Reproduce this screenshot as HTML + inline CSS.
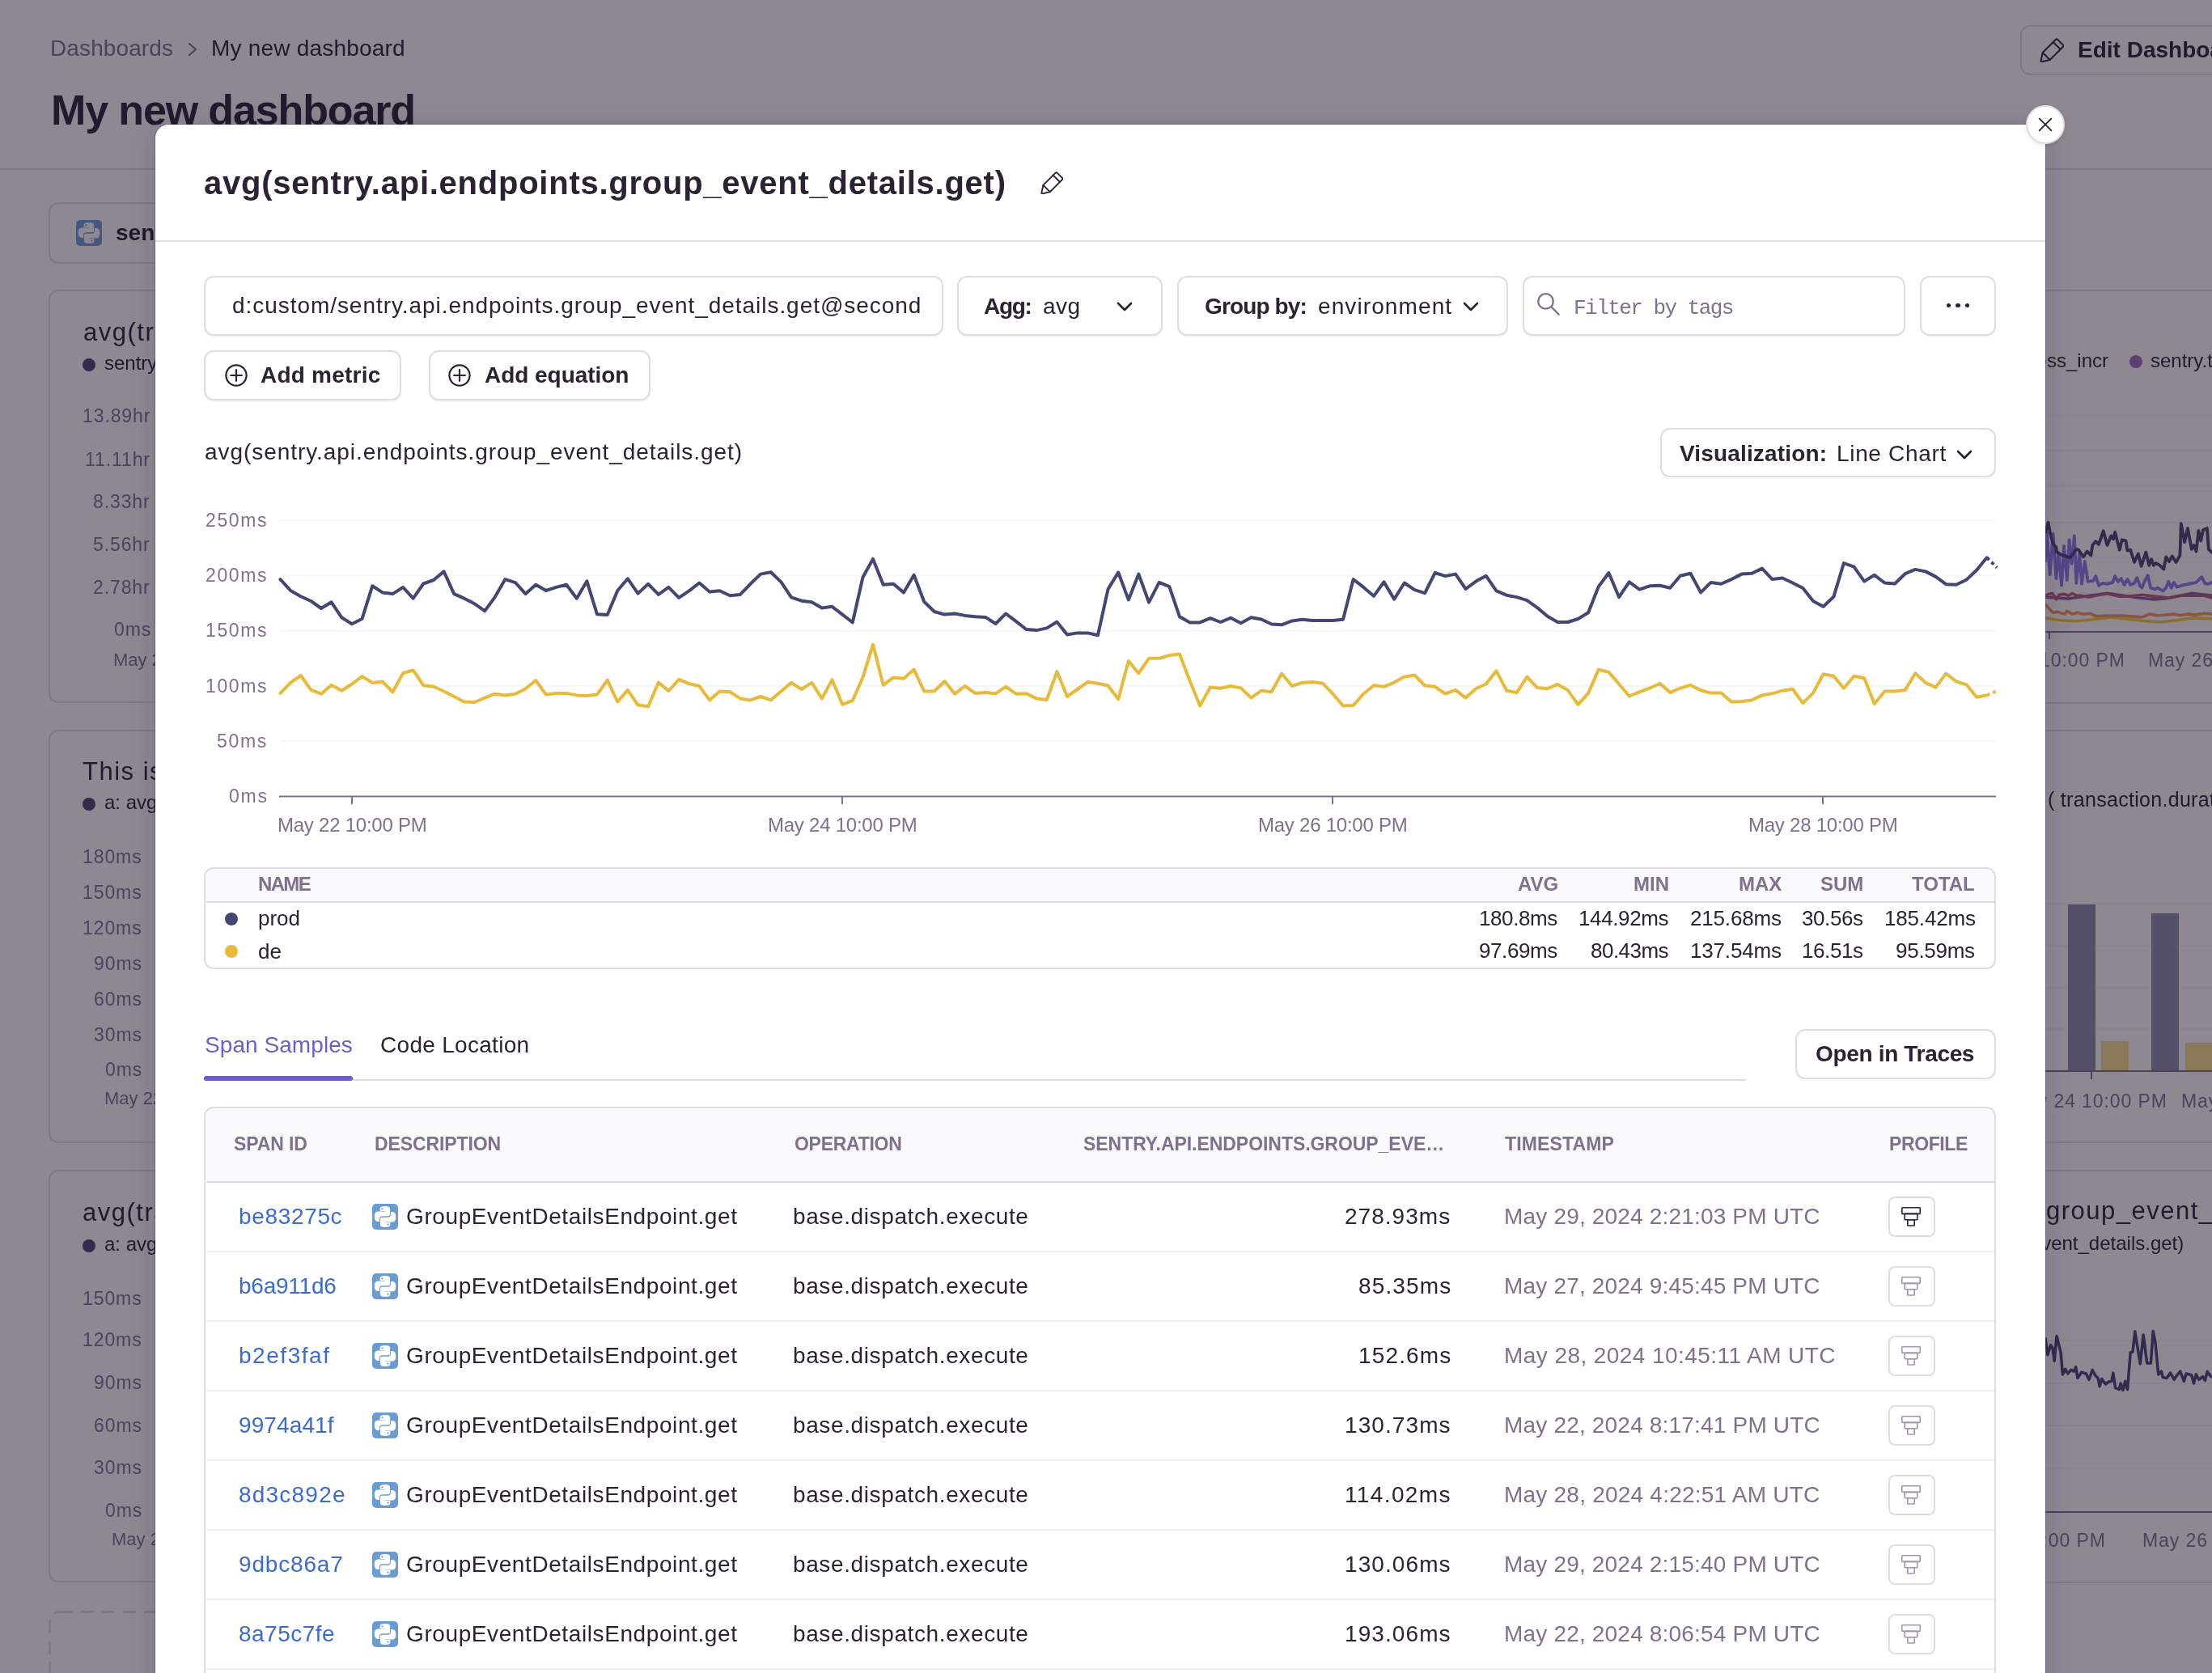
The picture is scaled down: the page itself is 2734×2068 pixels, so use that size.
<!DOCTYPE html><html><head><meta charset="utf-8"><style>
html,body{margin:0;padding:0;width:2734px;height:2068px;overflow:hidden;background:#fff;}
body{position:relative;font-family:"Liberation Sans",sans-serif;}
.a{position:absolute;box-sizing:border-box;}
.t{position:absolute;white-space:nowrap;line-height:1;will-change:transform;}
svg{position:absolute;overflow:visible;}
</style></head><body>
<svg width="0" height="0" style="position:absolute"><defs>
<symbol id="py" viewBox="0 0 32 32"><rect width="32" height="32" rx="5" fill="#6A9CD2"/>
<path id="pys" d="M9.6 9.0V6.2Q9.6 3 15.8 3Q22.1 3 22.1 6.2V12.9Q22.1 15.3 19.6 15.3H12.7Q9 15.3 9 19V21.9H7Q2.7 21.9 2.7 15.6Q2.7 9.6 7 9.6H15.8V9.0Z" fill="#fff"/>
<use href="#pys" transform="rotate(180 16 16)"/>
<circle cx="12.5" cy="6.3" r="1.1" fill="#6A9CD2"/><circle cx="19.5" cy="25.7" r="1.1" fill="#6A9CD2"/>
</symbol>
<symbol id="prof" viewBox="0 0 24 24"><g fill="none" stroke="currentColor" stroke-width="1.6" stroke-linejoin="round">
<rect x="0.8" y="0.8" width="22.4" height="7.6" rx="0.6"/><rect x="4.2" y="8.4" width="15.6" height="7.4" rx="0.5"/><rect x="7.8" y="15.8" width="8.4" height="7.2" rx="0.5"/></g></symbol>
<symbol id="chev" viewBox="0 0 20 12"><path d="M2 2L10 10L18 2" fill="none" stroke="currentColor" stroke-width="2.6" stroke-linecap="round" stroke-linejoin="round"/></symbol>
<symbol id="pencil" viewBox="0 0 28 28"><g fill="none" stroke="currentColor" stroke-width="1.9" stroke-linejoin="round" stroke-linecap="round">
<path d="M3.4 16.8L18.4 1.8Q19.6 0.6 20.8 1.8L26.8 7.8Q28 9 26.8 10.2L11.8 25.2L2.6 27.4Q1.2 27.7 1.4 26.3Z"/><path d="M3.4 16.8L11.8 25.2"/><path d="M15.6 4.6L24 13"/></g></symbol>
<symbol id="plusc" viewBox="0 0 28 28"><g fill="none" stroke="currentColor" stroke-width="2.2" stroke-linecap="round"><circle cx="14" cy="14" r="12.6"/><path d="M14 7.2V20.8M7.2 14H20.8"/></g></symbol>
</defs></svg>

<div class="t" style="left:62.00px;top:46.30px;font-size:28px;font-family:'Liberation Sans', sans-serif;letter-spacing:0.111px;color:#80708F;">Dashboards</div>
<svg style="left:231px;top:52px" width="16" height="18" viewBox="0 0 16 18"><path d="M3 2L11 9L3 16" fill="none" stroke="#80708F" stroke-width="2.2" stroke-linecap="round" stroke-linejoin="round"/></svg>
<div class="t" style="left:261.00px;top:46.30px;font-size:28px;font-family:'Liberation Sans', sans-serif;letter-spacing:0.200px;color:#2B2233;">My new dashboard</div>
<div class="t" style="left:63.00px;top:109.98px;font-size:52px;font-family:'Liberation Sans', sans-serif;font-weight:700;letter-spacing:-1.133px;color:#2B2233;">My new dashboard</div>
<div class="a" style="left:2497px;top:31px;width:337px;height:62px;border:2px solid #E0DCE5;border-radius:12px;background:#fff;"></div>
<svg style="left:2521px;top:47px;color:#2B2233" width="30" height="30" viewBox="0 0 28 28"><use href="#pencil"/></svg>
<div class="t" style="left:2568.00px;top:48.30px;font-size:28px;font-family:'Liberation Sans', sans-serif;font-weight:700;color:#2B2233;">Edit Dashboard</div>
<div class="a" style="left:0px;top:208px;width:2734px;height:2px;background:#E0DCE5;"></div>
<div class="a" style="left:60px;top:250px;width:640px;height:76px;border:2px solid #E0DCE5;border-radius:12px;background:#fff;"></div>
<svg style="left:94px;top:272px" width="32" height="32"><use href="#py"/></svg>
<div class="t" style="left:143.00px;top:274.30px;font-size:28px;font-family:'Liberation Sans', sans-serif;font-weight:700;color:#2B2233;">sentry</div>
<div class="a" style="left:60px;top:358px;width:1300px;height:511px;border:2px solid #E0DCE5;border-radius:12px;background:#fff;"></div>
<div class="a" style="left:60px;top:902px;width:1300px;height:511px;border:2px solid #E0DCE5;border-radius:12px;background:#fff;"></div>
<div class="a" style="left:60px;top:1446px;width:1300px;height:510px;border:2px solid #E0DCE5;border-radius:12px;background:#fff;"></div>
<svg style="left:0;top:0" width="2734" height="2068"><rect x="61.5" y="1992.5" width="1300" height="300" rx="12" fill="none" stroke="#E0DCE5" stroke-width="3" stroke-dasharray="16 10"/></svg>
<div class="a" style="left:1380px;top:358px;width:1454px;height:512px;border:2px solid #E0DCE5;border-radius:12px;background:#fff;"></div>
<div class="a" style="left:1380px;top:902px;width:1454px;height:511px;border:2px solid #E0DCE5;border-radius:12px;background:#fff;"></div>
<div class="a" style="left:1380px;top:1446px;width:1454px;height:511px;border:2px solid #E0DCE5;border-radius:12px;background:#fff;"></div>
<div class="t" style="left:103.00px;top:395.46px;font-size:31px;font-family:'Liberation Sans', sans-serif;letter-spacing:1.500px;color:#2B2233;">avg(transaction.duration)</div>
<div class="a" style="left:102px;top:443px;width:16px;height:16px;border-radius:8px;background:#444674"></div>
<div class="t" style="left:129.00px;top:436.68px;font-size:24px;font-family:'Liberation Sans', sans-serif;color:#2B2233;">sentry.tasks.process_incr</div>
<div class="t" style="left:102.10px;top:503.13px;font-size:23px;font-family:'Liberation Sans', sans-serif;letter-spacing:0.900px;color:#80708F;">13.89hr</div>
<div class="t" style="left:105.10px;top:556.53px;font-size:23px;font-family:'Liberation Sans', sans-serif;letter-spacing:0.900px;color:#80708F;">11.11hr</div>
<div class="t" style="left:115.00px;top:609.03px;font-size:23px;font-family:'Liberation Sans', sans-serif;letter-spacing:0.900px;color:#80708F;">8.33hr</div>
<div class="t" style="left:115.00px;top:661.53px;font-size:23px;font-family:'Liberation Sans', sans-serif;letter-spacing:0.900px;color:#80708F;">5.56hr</div>
<div class="t" style="left:115.00px;top:714.53px;font-size:23px;font-family:'Liberation Sans', sans-serif;letter-spacing:0.900px;color:#80708F;">2.78hr</div>
<div class="t" style="left:140.70px;top:767.13px;font-size:23px;font-family:'Liberation Sans', sans-serif;letter-spacing:0.900px;color:#80708F;">0ms</div>
<div class="t" style="left:140.00px;top:804.98px;font-size:22px;font-family:'Liberation Sans', sans-serif;color:#80708F;">May 22 10:00 PM</div>
<div class="t" style="left:102.00px;top:938.26px;font-size:31px;font-family:'Liberation Sans', sans-serif;letter-spacing:1.500px;color:#2B2233;">This is a widget</div>
<div class="a" style="left:102px;top:986px;width:16px;height:16px;border-radius:8px;background:#444674"></div>
<div class="t" style="left:129.00px;top:979.68px;font-size:24px;font-family:'Liberation Sans', sans-serif;color:#2B2233;">a: avg(transaction.duration)</div>
<div class="t" style="left:102.40px;top:1047.53px;font-size:23px;font-family:'Liberation Sans', sans-serif;letter-spacing:0.900px;color:#80708F;">180ms</div>
<div class="t" style="left:102.40px;top:1091.53px;font-size:23px;font-family:'Liberation Sans', sans-serif;letter-spacing:0.900px;color:#80708F;">150ms</div>
<div class="t" style="left:102.40px;top:1135.53px;font-size:23px;font-family:'Liberation Sans', sans-serif;letter-spacing:0.900px;color:#80708F;">120ms</div>
<div class="t" style="left:116.30px;top:1179.53px;font-size:23px;font-family:'Liberation Sans', sans-serif;letter-spacing:0.900px;color:#80708F;">90ms</div>
<div class="t" style="left:116.30px;top:1223.53px;font-size:23px;font-family:'Liberation Sans', sans-serif;letter-spacing:0.900px;color:#80708F;">60ms</div>
<div class="t" style="left:116.30px;top:1267.53px;font-size:23px;font-family:'Liberation Sans', sans-serif;letter-spacing:0.900px;color:#80708F;">30ms</div>
<div class="t" style="left:130.20px;top:1310.53px;font-size:23px;font-family:'Liberation Sans', sans-serif;letter-spacing:0.900px;color:#80708F;">0ms</div>
<div class="t" style="left:129.00px;top:1347.38px;font-size:22px;font-family:'Liberation Sans', sans-serif;color:#80708F;">May 22 10:00 PM</div>
<div class="t" style="left:102.00px;top:1482.76px;font-size:31px;font-family:'Liberation Sans', sans-serif;letter-spacing:1.500px;color:#2B2233;">avg(transaction.duration)</div>
<div class="a" style="left:102px;top:1532px;width:16px;height:16px;border-radius:8px;background:#444674"></div>
<div class="t" style="left:129.00px;top:1525.68px;font-size:24px;font-family:'Liberation Sans', sans-serif;color:#2B2233;">a: avg(transaction.duration)</div>
<div class="t" style="left:102.40px;top:1593.53px;font-size:23px;font-family:'Liberation Sans', sans-serif;letter-spacing:0.900px;color:#80708F;">150ms</div>
<div class="t" style="left:102.40px;top:1644.53px;font-size:23px;font-family:'Liberation Sans', sans-serif;letter-spacing:0.900px;color:#80708F;">120ms</div>
<div class="t" style="left:116.30px;top:1697.53px;font-size:23px;font-family:'Liberation Sans', sans-serif;letter-spacing:0.900px;color:#80708F;">90ms</div>
<div class="t" style="left:116.30px;top:1750.53px;font-size:23px;font-family:'Liberation Sans', sans-serif;letter-spacing:0.900px;color:#80708F;">60ms</div>
<div class="t" style="left:116.30px;top:1802.53px;font-size:23px;font-family:'Liberation Sans', sans-serif;letter-spacing:0.900px;color:#80708F;">30ms</div>
<div class="t" style="left:130.20px;top:1855.53px;font-size:23px;font-family:'Liberation Sans', sans-serif;letter-spacing:0.900px;color:#80708F;">0ms</div>
<div class="t" style="left:138.00px;top:1892.38px;font-size:22px;font-family:'Liberation Sans', sans-serif;color:#80708F;">May 22 10:00 PM</div>
<div class="t" style="left:2336.70px;top:434.08px;font-size:24px;font-family:'Liberation Sans', sans-serif;color:#2B2233;">sentry.tasks.process_incr</div>
<div class="a" style="left:2632px;top:439px;width:16px;height:16px;border-radius:8px;background:#9D6DB9"></div>
<div class="t" style="left:2658.00px;top:434.08px;font-size:24px;font-family:'Liberation Sans', sans-serif;color:#2B2233;">sentry.tasks.store</div>
<svg style="left:0;top:0" width="2734" height="2068">
<rect x="1380" y="512.6" width="1400" height="2" fill="#F6F4F8"/>
<rect x="1380" y="556" width="1400" height="2" fill="#F6F4F8"/>
<rect x="1380" y="599.5" width="1400" height="2" fill="#F6F4F8"/>
<rect x="1380" y="644.8" width="1400" height="2" fill="#F6F4F8"/>
<rect x="1380" y="688" width="1400" height="2" fill="#F6F4F8"/>
<rect x="1380" y="733.6" width="1400" height="2" fill="#F6F4F8"/>
<rect x="1380" y="1116" width="1400" height="2" fill="#F6F4F8"/>
<rect x="1380" y="1168" width="1400" height="2" fill="#F6F4F8"/>
<rect x="1380" y="1220" width="1400" height="2" fill="#F6F4F8"/>
<rect x="1380" y="1271" width="1400" height="2" fill="#F6F4F8"/>
<rect x="1380" y="1656" width="1400" height="2" fill="#F6F4F8"/>
<rect x="1380" y="1709" width="1400" height="2" fill="#F6F4F8"/>
<rect x="1380" y="1761" width="1400" height="2" fill="#F6F4F8"/>
<rect x="1380" y="1814" width="1400" height="2" fill="#F6F4F8"/>
<polyline points="2528.0,763.9 2547.1,766.8 2566.3,767.7 2585.4,765.8 2609.3,762.9 2633.2,765.8 2652.3,767.7 2671.5,768.7 2690.6,766.8 2709.7,763.9 2734.6,764.9" fill="none" stroke="#F7CF39" stroke-width="3.6" stroke-linejoin="round"/>
<polyline points="2528.0,746.7 2532.8,752.4 2537.6,757.2 2542.3,756.2 2551.9,759.1 2554.8,755.3 2561.5,759.1 2568.2,757.2 2573.9,759.1 2582.5,758.2 2590.2,761.5 2604.5,761.0 2623.6,761.0 2647.5,762.9 2657.1,759.1 2666.7,761.0 2685.8,759.1 2695.4,760.5 2704.9,759.1 2714.5,760.1 2724.1,758.2 2734.6,759.1" fill="none" stroke="#F79959" stroke-width="3.6" stroke-linejoin="round"/>
<polyline points="2528.0,738.1 2556.7,740.0 2604.5,733.3 2642.8,739.0 2661.9,740.9 2676.2,740.0 2709.7,733.3 2734.6,736.2" fill="none" stroke="#81639D" stroke-width="3.6" stroke-linejoin="round"/>
<polyline points="2528.0,736.2 2532.8,734.2 2536.6,733.3 2541.4,740.9 2545.2,735.2 2551.0,734.2 2556.7,736.2 2561.5,733.3 2566.3,736.2 2572.0,736.2 2581.6,738.1 2594.9,735.2 2604.5,733.8 2618.9,737.1 2633.2,737.1 2647.5,735.2 2661.9,737.1 2681.0,739.0 2695.4,736.2 2709.7,736.2 2724.1,736.2 2734.6,739.0" fill="none" stroke="#BF5979" stroke-width="3.6" stroke-linejoin="round"/>
<polyline points="2528.0,695.0 2529.9,658.7 2533.7,710.3 2537.6,659.6 2541.4,715.1 2544.3,683.6 2548.1,723.7 2551.0,675.0 2554.8,717.0 2557.6,667.3 2560.5,696.9 2563.9,662.5 2566.3,720.9 2570.1,683.6 2573.0,721.8 2576.8,694.1 2580.6,718.9 2587.3,718.0 2590.2,712.2 2594.0,723.7 2598.8,720.9 2604.5,721.8 2611.2,719.9 2614.1,712.2 2617.9,718.9 2621.7,715.1 2625.6,722.8 2629.4,716.1 2633.2,722.8 2638.0,720.9 2641.3,714.2 2644.7,723.7 2647.5,726.6 2650.4,718.9 2654.7,711.3 2658.1,726.6 2663.8,728.5 2666.7,726.6 2673.4,730.4 2677.2,726.6 2680.1,718.9 2683.9,726.6 2686.8,719.9 2690.6,725.6 2696.3,723.7 2704.9,721.8 2714.5,719.9 2721.2,713.2 2725.0,720.9 2728.8,721.8 2734.6,719.9" fill="none" stroke="#8E78E6" stroke-width="3.8" stroke-linejoin="round"/>
<polyline points="2528.0,658.7 2531.6,645.8 2533.7,657.7 2537.6,672.1 2541.4,676.9 2541.9,682.1 2547.1,685.5 2552.9,687.4 2558.6,689.3 2566.3,678.8 2569.1,679.7 2574.9,688.3 2579.6,681.6 2584.4,686.4 2586.3,674.0 2590.2,669.2 2594.0,673.0 2599.7,656.3 2604.5,674.0 2609.3,662.5 2612.2,666.3 2614.1,657.7 2619.8,679.7 2622.7,667.3 2627.5,668.3 2629.4,680.7 2633.2,679.7 2638.0,695.0 2642.8,684.5 2646.6,699.8 2652.3,682.6 2656.2,698.9 2659.0,691.2 2661.9,698.9 2664.8,696.0 2669.5,698.9 2674.3,703.6 2677.2,688.3 2681.0,694.1 2684.8,687.4 2689.6,695.0 2694.4,686.4 2695.8,647.2 2700.1,670.2 2704.0,653.0 2708.8,678.8 2711.6,674.0 2714.5,681.6 2717.4,655.8 2720.2,668.3 2723.1,654.9 2727.9,653.0 2729.8,678.8 2734.6,683.6" fill="none" stroke="#444674" stroke-width="3.8" stroke-linejoin="round"/>
<rect x="1380" y="780" width="1400" height="2" fill="#80708F"/><rect x="2532" y="781" width="2" height="9" fill="#80708F"/>
</svg>
<div class="t" style="left:2433.40px;top:805.13px;font-size:23px;font-family:'Liberation Sans', sans-serif;letter-spacing:0.900px;color:#80708F;">May 24 10:00 PM</div>
<div class="t" style="left:2655.00px;top:805.13px;font-size:23px;font-family:'Liberation Sans', sans-serif;letter-spacing:0.900px;color:#80708F;">May 26 10:00 PM</div>
<div class="t" style="left:2531.00px;top:975.84px;font-size:25px;font-family:'Liberation Sans', sans-serif;letter-spacing:0.300px;color:#2B2233;">( transaction.duration)</div>
<div class="a" style="left:2555.6px;top:1117.6px;width:34.40000000000009px;height:206.4000000000001px;background:#8D8FAD;"></div>
<div class="a" style="left:2597px;top:1287px;width:34.40000000000009px;height:37px;background:#F7E189;"></div>
<div class="a" style="left:2659px;top:1128.6px;width:34.40000000000009px;height:195.4000000000001px;background:#8D8FAD;"></div>
<div class="a" style="left:2700.5px;top:1289px;width:33.5px;height:35px;background:#F7E189;"></div>
<div class="a" style="left:1380px;top:1323px;width:1354px;height:2px;background:#80708F;"></div>
<div class="a" style="left:2584px;top:1324px;width:2px;height:10px;background:#80708F;"></div>
<div class="t" style="left:2485.40px;top:1349.53px;font-size:23px;font-family:'Liberation Sans', sans-serif;letter-spacing:0.900px;color:#80708F;">May 24 10:00 PM</div>
<div class="t" style="left:2695.70px;top:1349.53px;font-size:23px;font-family:'Liberation Sans', sans-serif;letter-spacing:0.900px;color:#80708F;">May 26</div>
<div class="t" style="left:2529.00px;top:1480.76px;font-size:31px;font-family:'Liberation Sans', sans-serif;letter-spacing:1.500px;color:#2B2233;">group_event_details.get)</div>
<div class="t" style="left:2141.50px;top:1525.08px;font-size:24px;font-family:'Liberation Sans', sans-serif;color:#2B2233;">a: avg(sentry.api.endpoints.group_event_details.get)</div>
<svg style="left:0;top:0" width="2734" height="2068">
<polyline points="2528.0,1653.3 2530.8,1674.7 2534.5,1662.6 2536.8,1665.4 2539.2,1682.2 2542.0,1651.4 2547.1,1671.9 2549.4,1698.9 2552.7,1692.4 2555.9,1698.0 2559.7,1693.3 2563.4,1695.2 2565.7,1689.6 2568.0,1703.6 2572.7,1696.1 2578.3,1698.0 2582.0,1705.4 2586.2,1693.3 2589.5,1699.8 2593.2,1703.6 2595.1,1713.8 2597.8,1704.5 2602.5,1711.0 2606.2,1708.2 2610.0,1707.3 2611.8,1697.1 2614.6,1715.7 2619.3,1717.5 2621.1,1710.1 2623.9,1718.5 2626.7,1707.3 2629.5,1717.5 2633.2,1671.9 2636.0,1671.0 2638.8,1645.8 2645.3,1685.9 2649.1,1650.0 2653.7,1684.9 2658.4,1684.9 2661.2,1645.4 2664.0,1659.8 2667.7,1698.9 2671.4,1695.2 2673.3,1702.6 2677.9,1703.6 2682.6,1697.1 2687.2,1705.4 2690.0,1700.8 2694.7,1695.2 2699.4,1707.3 2702.1,1698.0 2708.7,1699.8 2711.5,1710.1 2714.3,1698.9 2718.0,1705.4 2722.6,1701.7 2725.4,1706.4 2728.2,1695.2 2731.9,1700.8 2735.7,1702.6" fill="none" stroke="#444674" stroke-width="3.5" stroke-linejoin="round"/>
</svg>
<div class="a" style="left:1380px;top:1868px;width:1354px;height:2px;background:#80708F;"></div>
<div class="t" style="left:2409.40px;top:1892.53px;font-size:23px;font-family:'Liberation Sans', sans-serif;letter-spacing:0.900px;color:#80708F;">May 24 10:00 PM</div>
<div class="t" style="left:2648.00px;top:1892.53px;font-size:23px;font-family:'Liberation Sans', sans-serif;letter-spacing:0.900px;color:#80708F;">May 26 10:00 PM</div>
<div class="a" style="left:0;top:0;width:2734px;height:2068px;background:rgba(29,17,39,0.5)"></div>
<div class="a" style="left:192px;top:154px;width:2336px;height:2100px;background:#fff;border-radius:16px;box-shadow:0 0 0 1px rgba(50,30,90,0.28),0 6px 36px rgba(29,17,39,0.15);"></div>
<div class="t" style="left:252.00px;top:206.14px;font-size:40px;font-family:'Liberation Sans', sans-serif;font-weight:700;letter-spacing:0.750px;color:#2B2233;">avg(sentry.api.endpoints.group_event_details.get)</div>
<svg style="left:1286px;top:212px;color:#2B2233" width="28" height="28" viewBox="0 0 28 28"><use href="#pencil"/></svg>
<div class="a" style="left:192px;top:297px;width:2336px;height:2px;background:#E0DCE5;"></div>
<div class="a" style="left:2504px;top:130px;width:48px;height:48px;border-radius:24px;background:#fff;border:2px solid #E0DCE5;box-shadow:0 2px 6px rgba(0,0,0,0.08)"></div>
<svg style="left:2519px;top:145px" width="18" height="18" viewBox="0 0 18 18"><path d="M1.6 1.6L16.4 16.4M16.4 1.6L1.6 16.4" stroke="#2B2233" stroke-width="1.8" stroke-linecap="round"/></svg>
<div class="a" style="left:252px;top:341px;width:914px;height:74px;border:2px solid #E0DCE5;border-radius:12px;background:#fff;box-shadow:0 2px 0 rgba(43,34,51,0.04);"></div>
<div class="t" style="left:287.40px;top:364.10px;font-size:28px;font-family:'Liberation Sans', sans-serif;letter-spacing:0.949px;color:#2B2233;">d:custom/sentry.api.endpoints.group_event_details.get@second</div>
<div class="a" style="left:1183px;top:341px;width:254px;height:74px;border:2px solid #E0DCE5;border-radius:12px;background:#fff;box-shadow:0 2px 0 rgba(43,34,51,0.04);"></div>
<div class="t" style="left:1216.00px;top:365.10px;font-size:28px;font-family:'Liberation Sans', sans-serif;font-weight:700;letter-spacing:-1.333px;color:#2B2233;">Agg:</div>
<div class="t" style="left:1289.00px;top:365.10px;font-size:28px;font-family:'Liberation Sans', sans-serif;letter-spacing:0.500px;color:#2B2233;">avg</div>
<svg style="left:1380px;top:373px;color:#2B2233" width="20" height="12" viewBox="0 0 20 12"><use href="#chev"/></svg>
<div class="a" style="left:1455px;top:341px;width:409px;height:74px;border:2px solid #E0DCE5;border-radius:12px;background:#fff;box-shadow:0 2px 0 rgba(43,34,51,0.04);"></div>
<div class="t" style="left:1489.00px;top:365.10px;font-size:28px;font-family:'Liberation Sans', sans-serif;font-weight:700;letter-spacing:-0.875px;color:#2B2233;">Group by:</div>
<div class="t" style="left:1629.00px;top:365.10px;font-size:28px;font-family:'Liberation Sans', sans-serif;letter-spacing:1.100px;color:#2B2233;">environment</div>
<svg style="left:1808px;top:373px;color:#2B2233" width="20" height="12" viewBox="0 0 20 12"><use href="#chev"/></svg>
<div class="a" style="left:1882px;top:341px;width:473px;height:74px;border:2px solid #E0DCE5;border-radius:12px;background:#fff;box-shadow:0 2px 0 rgba(43,34,51,0.04);"></div>
<svg style="left:1898px;top:360px" width="32" height="32" viewBox="0 0 32 32"><circle cx="12.5" cy="12.4" r="9.3" fill="none" stroke="#80708F" stroke-width="2.3"/><path d="M19.3 19.3L28.6 28.6" stroke="#80708F" stroke-width="2.3" stroke-linecap="round"/></svg>
<div class="t" style="left:1945.10px;top:367.87px;font-size:26px;font-family:'Liberation Mono', monospace;letter-spacing:-1.538px;color:#80708F;">Filter by tags</div>
<div class="a" style="left:2373px;top:341px;width:94px;height:74px;border:2px solid #E0DCE5;border-radius:12px;background:#fff;box-shadow:0 2px 0 rgba(43,34,51,0.04);"></div>
<div class="a" style="left:2405.6px;top:375.3px;width:5.2px;height:5.2px;border-radius:3px;background:#2B2233"></div>
<div class="a" style="left:2417.4px;top:375.3px;width:5.2px;height:5.2px;border-radius:3px;background:#2B2233"></div>
<div class="a" style="left:2429.1px;top:375.3px;width:5.2px;height:5.2px;border-radius:3px;background:#2B2233"></div>
<div class="a" style="left:252px;top:433px;width:244px;height:62px;border:2px solid #E0DCE5;border-radius:12px;background:#fff;box-shadow:0 2px 0 rgba(43,34,51,0.04);"></div>
<svg style="left:278px;top:450px;color:#2B2233" width="28" height="28" viewBox="0 0 28 28"><use href="#plusc"/></svg>
<div class="t" style="left:322.10px;top:449.90px;font-size:28px;font-family:'Liberation Sans', sans-serif;font-weight:700;letter-spacing:0.222px;color:#2B2233;">Add metric</div>
<div class="a" style="left:530px;top:433px;width:274px;height:62px;border:2px solid #E0DCE5;border-radius:12px;background:#fff;box-shadow:0 2px 0 rgba(43,34,51,0.04);"></div>
<svg style="left:554px;top:450px;color:#2B2233" width="28" height="28" viewBox="0 0 28 28"><use href="#plusc"/></svg>
<div class="t" style="left:599.00px;top:449.90px;font-size:28px;font-family:'Liberation Sans', sans-serif;font-weight:700;letter-spacing:-0.036px;color:#2B2233;">Add equation</div>
<div class="t" style="left:253.00px;top:545.30px;font-size:28px;font-family:'Liberation Sans', sans-serif;letter-spacing:0.938px;color:#2B2233;">avg(sentry.api.endpoints.group_event_details.get)</div>
<div class="a" style="left:2052px;top:529px;width:415px;height:61px;border:2px solid #E0DCE5;border-radius:12px;background:#fff;box-shadow:0 2px 0 rgba(43,34,51,0.04);"></div>
<div class="t" style="left:2076.00px;top:547.00px;font-size:28px;font-family:'Liberation Sans', sans-serif;font-weight:700;letter-spacing:0.154px;color:#2B2233;">Visualization:</div>
<div class="t" style="left:2270.00px;top:547.00px;font-size:28px;font-family:'Liberation Sans', sans-serif;letter-spacing:0.667px;color:#2B2233;">Line Chart</div>
<svg style="left:2418px;top:556px;color:#2B2233" width="20" height="12" viewBox="0 0 20 12"><use href="#chev"/></svg>
<svg style="left:0;top:0" width="2734" height="2068">
<rect x="346" y="642.0" width="2121" height="2" fill="#F7F6F9"/>
<rect x="346" y="710.3" width="2121" height="2" fill="#F7F6F9"/>
<rect x="346" y="778.6" width="2121" height="2" fill="#F7F6F9"/>
<rect x="346" y="846.9" width="2121" height="2" fill="#F7F6F9"/>
<rect x="346" y="915.2" width="2121" height="2" fill="#F7F6F9"/>
<rect x="345" y="983.5" width="2122" height="2" fill="#80708F"/>
<rect x="434" y="984" width="2" height="10" fill="#80708F"/>
<rect x="1040" y="984" width="2" height="10" fill="#80708F"/>
<rect x="1646" y="984" width="2" height="10" fill="#80708F"/>
<rect x="2252" y="984" width="2" height="10" fill="#80708F"/>
<polyline points="346.5,856.9 359.1,843.9 371.8,835.0 384.4,852.9 397.0,857.7 409.6,846.8 422.3,853.7 434.9,845.5 447.5,836.1 460.2,843.9 472.8,842.6 485.4,855.3 498.1,832.2 510.7,828.4 523.3,847.2 536.0,848.8 548.6,854.5 561.2,861.0 573.8,867.5 586.5,868.0 599.1,862.6 611.7,857.7 624.4,859.4 637.0,857.7 649.6,851.2 662.2,841.0 674.9,858.6 687.5,856.9 700.1,856.9 712.8,859.4 725.4,859.9 738.0,858.6 750.7,840.7 763.3,867.5 775.9,852.9 788.5,871.6 801.2,873.2 813.8,843.6 826.4,854.0 839.1,839.8 851.7,845.2 864.3,848.0 877.0,865.4 889.6,854.5 902.2,855.3 914.9,863.4 927.5,865.4 940.1,861.0 952.7,865.4 965.4,854.5 978.0,843.9 990.6,852.0 1003.3,843.9 1015.9,863.4 1028.5,840.3 1041.2,870.8 1053.8,865.9 1066.4,837.4 1079.0,796.7 1091.7,846.8 1104.3,837.4 1116.9,838.7 1129.6,827.6 1142.2,854.5 1154.8,854.5 1167.5,842.0 1180.1,857.7 1192.7,848.0 1205.3,856.9 1218.0,856.1 1230.6,857.3 1243.2,848.8 1255.9,857.7 1268.5,857.3 1281.1,863.4 1293.8,865.1 1306.4,830.1 1319.0,861.0 1331.6,852.0 1344.3,843.1 1356.9,844.7 1369.5,847.5 1382.2,864.3 1394.8,817.1 1407.4,832.2 1420.0,813.8 1432.7,813.8 1445.3,810.1 1457.9,808.4 1470.6,841.5 1483.2,872.4 1495.8,849.6 1508.5,850.7 1521.1,848.0 1533.7,850.4 1546.4,862.6 1559.0,853.7 1571.6,855.3 1584.2,832.5 1596.9,848.0 1609.5,843.9 1622.1,843.1 1634.8,844.7 1647.4,857.7 1660.0,872.4 1672.7,871.9 1685.3,857.7 1697.9,847.2 1710.5,848.8 1723.2,843.6 1735.8,836.6 1748.4,834.5 1761.1,847.5 1773.7,848.8 1786.3,857.7 1799.0,852.9 1811.6,862.6 1824.2,851.2 1836.8,845.5 1849.5,829.3 1862.1,853.7 1874.7,856.1 1887.4,836.6 1900.0,850.1 1912.6,851.2 1925.2,845.9 1937.9,853.3 1950.5,870.8 1963.1,856.9 1975.8,827.6 1988.4,830.9 2001.0,845.5 2013.7,860.5 2026.3,855.3 2038.9,850.7 2051.6,844.7 2064.2,856.1 2076.8,850.7 2089.4,846.8 2102.1,853.3 2114.7,856.6 2127.3,856.6 2140.0,867.5 2152.6,867.0 2165.2,865.4 2177.9,859.4 2190.5,857.3 2203.1,853.7 2215.7,851.7 2228.4,869.1 2241.0,856.6 2253.6,833.3 2266.3,835.8 2278.9,850.7 2291.5,835.8 2304.2,838.2 2316.8,869.9 2329.4,854.5 2342.0,854.5 2354.7,852.9 2367.3,832.2 2379.9,843.9 2392.6,849.6 2405.2,832.5 2417.8,842.3 2430.5,846.3 2443.1,861.8 2455.7,859.4" fill="none" stroke="#E9B93A" stroke-width="4" stroke-linejoin="round" stroke-linecap="round"/>
<line x1="2455.7" y1="859.4" x2="2468.3" y2="854.0" stroke="#E9B93A" stroke-width="4" stroke-dasharray="4 4"/>
<polyline points="346.5,716.1 359.1,730.0 371.8,737.3 384.4,743.0 397.0,752.0 409.6,744.3 422.3,763.3 434.9,771.2 447.5,765.0 460.2,724.3 472.8,732.4 485.4,734.1 498.1,725.9 510.7,739.7 523.3,721.5 536.0,717.0 548.6,706.4 561.2,734.1 573.8,739.7 586.5,746.3 599.1,755.2 611.7,738.1 624.4,716.1 637.0,720.2 649.6,734.1 662.2,722.7 674.9,730.0 687.5,725.9 700.1,722.7 712.8,739.7 725.4,718.3 738.0,759.3 750.7,760.1 763.3,730.0 775.9,715.3 788.5,733.6 801.2,721.8 813.8,734.9 826.4,725.9 839.1,738.9 851.7,730.3 864.3,720.5 877.0,731.6 889.6,730.3 902.2,736.2 914.9,734.9 927.5,721.8 940.1,709.6 952.7,707.2 965.4,719.4 978.0,738.4 990.6,742.7 1003.3,744.3 1015.9,751.5 1028.5,749.8 1041.2,759.6 1053.8,769.4 1066.4,713.7 1079.0,690.9 1091.7,722.7 1104.3,721.8 1116.9,732.4 1129.6,710.8 1142.2,743.8 1154.8,756.0 1167.5,759.6 1180.1,758.5 1192.7,760.9 1205.3,762.2 1218.0,762.9 1230.6,771.0 1243.2,758.5 1255.9,768.2 1268.5,778.0 1281.1,779.1 1293.8,776.4 1306.4,768.7 1319.0,784.5 1331.6,782.4 1344.3,782.4 1356.9,785.3 1369.5,728.4 1382.2,707.5 1394.8,741.4 1407.4,709.6 1420.0,744.6 1432.7,719.9 1445.3,725.1 1457.9,762.2 1470.6,769.4 1483.2,769.4 1495.8,764.2 1508.5,769.0 1521.1,763.8 1533.7,770.3 1546.4,763.3 1559.0,765.5 1571.6,771.5 1584.2,772.3 1596.9,767.4 1609.5,765.8 1622.1,767.1 1634.8,767.1 1647.4,767.1 1660.0,765.8 1672.7,716.1 1685.3,725.9 1697.9,736.8 1710.5,719.4 1723.2,740.6 1735.8,720.5 1748.4,729.2 1761.1,733.2 1773.7,708.0 1786.3,712.1 1799.0,709.6 1811.6,728.0 1824.2,718.6 1836.8,711.8 1849.5,730.3 1862.1,735.7 1874.7,738.1 1887.4,742.2 1900.0,751.1 1912.6,761.7 1925.2,769.0 1937.9,769.0 1950.5,765.0 1963.1,757.3 1975.8,725.1 1988.4,708.0 2001.0,738.1 2013.7,719.4 2026.3,728.7 2038.9,724.3 2051.6,723.8 2064.2,726.7 2076.8,711.8 2089.4,708.8 2102.1,732.4 2114.7,719.9 2127.3,721.8 2140.0,716.1 2152.6,709.6 2165.2,708.8 2177.9,702.6 2190.5,716.1 2203.1,714.5 2215.7,720.5 2228.4,727.1 2241.0,743.0 2253.6,749.8 2266.3,737.8 2278.9,696.1 2291.5,700.7 2304.2,718.6 2316.8,710.8 2329.4,720.5 2342.0,721.5 2354.7,709.2 2367.3,703.9 2379.9,706.4 2392.6,712.9 2405.2,722.2 2417.8,722.7 2430.5,716.6 2443.1,704.8 2455.7,689.3" fill="none" stroke="#444674" stroke-width="4" stroke-linejoin="round" stroke-linecap="round"/>
<line x1="2455.7" y1="689.3" x2="2468.3" y2="701.5" stroke="#444674" stroke-width="4" stroke-dasharray="4 4"/>
</svg>
<div class="t" style="left:253.60px;top:631.83px;font-size:23px;font-family:'Liberation Sans', sans-serif;letter-spacing:1.600px;color:#80708F;">250ms</div>
<div class="t" style="left:253.60px;top:700.13px;font-size:23px;font-family:'Liberation Sans', sans-serif;letter-spacing:1.600px;color:#80708F;">200ms</div>
<div class="t" style="left:253.60px;top:768.43px;font-size:23px;font-family:'Liberation Sans', sans-serif;letter-spacing:1.600px;color:#80708F;">150ms</div>
<div class="t" style="left:253.60px;top:836.73px;font-size:23px;font-family:'Liberation Sans', sans-serif;letter-spacing:1.600px;color:#80708F;">100ms</div>
<div class="t" style="left:268.00px;top:905.03px;font-size:23px;font-family:'Liberation Sans', sans-serif;letter-spacing:1.667px;color:#80708F;">50ms</div>
<div class="t" style="left:282.50px;top:973.33px;font-size:23px;font-family:'Liberation Sans', sans-serif;letter-spacing:1.750px;color:#80708F;">0ms</div>
<div class="t" style="left:342.70px;top:1007.68px;font-size:24px;font-family:'Liberation Sans', sans-serif;letter-spacing:-0.243px;color:#80708F;">May 22 10:00 PM</div>
<div class="t" style="left:948.70px;top:1007.68px;font-size:24px;font-family:'Liberation Sans', sans-serif;letter-spacing:-0.243px;color:#80708F;">May 24 10:00 PM</div>
<div class="t" style="left:1554.70px;top:1007.68px;font-size:24px;font-family:'Liberation Sans', sans-serif;letter-spacing:-0.243px;color:#80708F;">May 26 10:00 PM</div>
<div class="t" style="left:2160.70px;top:1007.68px;font-size:24px;font-family:'Liberation Sans', sans-serif;letter-spacing:-0.243px;color:#80708F;">May 28 10:00 PM</div>
<div class="a" style="left:252px;top:1072px;width:2215px;height:126px;border:2px solid #E0DCE5;border-radius:12px;background:#fff;overflow:hidden;"></div>
<div class="a" style="left:255px;top:1075px;width:2210px;height:40px;background:#FAF9FB;border-radius:10px 10px 0 0;"></div>
<div class="a" style="left:255px;top:1114px;width:2210px;height:2px;background:#E0DCE5;"></div>
<div class="t" style="left:319.30px;top:1081.28px;font-size:24px;font-family:'Liberation Sans', sans-serif;font-weight:700;letter-spacing:-1.667px;color:#80708F;">NAME</div>
<div class="t" style="left:1876.00px;top:1081.28px;font-size:24px;font-family:'Liberation Sans', sans-serif;font-weight:700;color:#80708F;">AVG</div>
<div class="t" style="left:2018.70px;top:1081.28px;font-size:24px;font-family:'Liberation Sans', sans-serif;font-weight:700;color:#80708F;">MIN</div>
<div class="t" style="left:2148.60px;top:1081.28px;font-size:24px;font-family:'Liberation Sans', sans-serif;font-weight:700;color:#80708F;">MAX</div>
<div class="t" style="left:2249.90px;top:1081.28px;font-size:24px;font-family:'Liberation Sans', sans-serif;font-weight:700;color:#80708F;">SUM</div>
<div class="t" style="left:2363.40px;top:1081.28px;font-size:24px;font-family:'Liberation Sans', sans-serif;font-weight:700;color:#80708F;">TOTAL</div>
<div class="a" style="left:278px;top:1128px;width:16px;height:16px;border-radius:8px;background:#444674"></div>
<div class="a" style="left:278px;top:1168px;width:16px;height:16px;border-radius:8px;background:#E9B93A"></div>
<div class="t" style="left:319.30px;top:1122.49px;font-size:26px;font-family:'Liberation Sans', sans-serif;color:#2B2233;">prod</div>
<div class="t" style="left:319.30px;top:1162.99px;font-size:26px;font-family:'Liberation Sans', sans-serif;color:#2B2233;">de</div>
<div class="t" style="left:1828.40px;top:1122.49px;font-size:26px;font-family:'Liberation Sans', sans-serif;letter-spacing:-0.400px;color:#2B2233;">180.8ms</div>
<div class="t" style="left:1951.40px;top:1122.49px;font-size:26px;font-family:'Liberation Sans', sans-serif;letter-spacing:-0.386px;color:#2B2233;">144.92ms</div>
<div class="t" style="left:2088.80px;top:1122.49px;font-size:26px;font-family:'Liberation Sans', sans-serif;letter-spacing:-0.171px;color:#2B2233;">215.68ms</div>
<div class="t" style="left:2227.00px;top:1122.49px;font-size:26px;font-family:'Liberation Sans', sans-serif;letter-spacing:-0.420px;color:#2B2233;">30.56s</div>
<div class="t" style="left:2328.60px;top:1122.49px;font-size:26px;font-family:'Liberation Sans', sans-serif;letter-spacing:-0.171px;color:#2B2233;">185.42ms</div>
<div class="t" style="left:1828.40px;top:1162.49px;font-size:26px;font-family:'Liberation Sans', sans-serif;letter-spacing:-0.400px;color:#2B2233;">97.69ms</div>
<div class="t" style="left:1965.80px;top:1162.49px;font-size:26px;font-family:'Liberation Sans', sans-serif;letter-spacing:-0.517px;color:#2B2233;">80.43ms</div>
<div class="t" style="left:2088.80px;top:1162.49px;font-size:26px;font-family:'Liberation Sans', sans-serif;letter-spacing:-0.171px;color:#2B2233;">137.54ms</div>
<div class="t" style="left:2227.00px;top:1162.49px;font-size:26px;font-family:'Liberation Sans', sans-serif;letter-spacing:-0.420px;color:#2B2233;">16.51s</div>
<div class="t" style="left:2343.00px;top:1162.49px;font-size:26px;font-family:'Liberation Sans', sans-serif;letter-spacing:-0.267px;color:#2B2233;">95.59ms</div>
<div class="t" style="left:252.60px;top:1278.00px;font-size:28px;font-family:'Liberation Sans', sans-serif;letter-spacing:0.064px;color:#6C5FC7;">Span Samples</div>
<div class="t" style="left:469.50px;top:1278.00px;font-size:28px;font-family:'Liberation Sans', sans-serif;letter-spacing:0.292px;color:#2B2233;">Code Location</div>
<div class="a" style="left:252px;top:1334px;width:1906px;height:2px;background:#E0DCE5;"></div>
<div class="a" style="left:251.6px;top:1330px;width:184.70000000000002px;height:6px;background:#6C5FC7;border-radius:3px;"></div>
<div class="a" style="left:2219px;top:1272px;width:248px;height:62px;border:2px solid #E0DCE5;border-radius:12px;background:#fff;box-shadow:0 2px 0 rgba(43,34,51,0.04);"></div>
<div class="t" style="left:2244.00px;top:1289.30px;font-size:28px;font-family:'Liberation Sans', sans-serif;font-weight:700;letter-spacing:-0.331px;color:#2B2233;">Open in Traces</div>
<div class="a" style="left:252px;top:1368px;width:2215px;height:932px;border:2px solid #E0DCE5;border-radius:12px;background:#fff;"></div>
<div class="a" style="left:255px;top:1371px;width:2210px;height:90px;background:#FAF9FB;border-radius:10px 10px 0 0;"></div>
<div class="a" style="left:255px;top:1460px;width:2210px;height:2px;background:#E0DCE5;"></div>
<div class="t" style="left:288.80px;top:1402.53px;font-size:23px;font-family:'Liberation Sans', sans-serif;font-weight:700;letter-spacing:-0.133px;color:#80708F;">SPAN ID</div>
<div class="t" style="left:463.40px;top:1402.53px;font-size:23px;font-family:'Liberation Sans', sans-serif;font-weight:700;letter-spacing:-0.100px;color:#80708F;">DESCRIPTION</div>
<div class="t" style="left:981.80px;top:1402.53px;font-size:23px;font-family:'Liberation Sans', sans-serif;font-weight:700;letter-spacing:-0.275px;color:#80708F;">OPERATION</div>
<div class="t" style="left:1339.00px;top:1402.53px;font-size:23px;font-family:'Liberation Sans', sans-serif;font-weight:700;letter-spacing:-0.050px;color:#80708F;">SENTRY.API.ENDPOINTS.GROUP_EVE…</div>
<div class="t" style="left:1860.40px;top:1402.53px;font-size:23px;font-family:'Liberation Sans', sans-serif;font-weight:700;letter-spacing:0.137px;color:#80708F;">TIMESTAMP</div>
<div class="t" style="left:2335.00px;top:1402.53px;font-size:23px;font-family:'Liberation Sans', sans-serif;font-weight:700;letter-spacing:-0.383px;color:#80708F;">PROFILE</div>
<div class="a" style="left:255px;top:1546px;width:2210px;height:2px;background:#F0ECF3;"></div>
<div class="t" style="left:295.00px;top:1489.60px;font-size:28px;font-family:'Liberation Sans', sans-serif;letter-spacing:0.657px;color:#3A6BD0;">be83275c</div>
<svg style="left:460px;top:1488px" width="32" height="32"><use href="#py"/></svg>
<div class="t" style="left:502.10px;top:1489.60px;font-size:28px;font-family:'Liberation Sans', sans-serif;letter-spacing:0.596px;color:#2B2233;">GroupEventDetailsEndpoint.get</div>
<div class="t" style="left:980.40px;top:1489.60px;font-size:28px;font-family:'Liberation Sans', sans-serif;letter-spacing:0.615px;color:#2B2233;">base.dispatch.execute</div>
<div class="t" style="left:1662.40px;top:1489.60px;font-size:28px;font-family:'Liberation Sans', sans-serif;letter-spacing:1.029px;color:#2B2233;">278.93ms</div>
<div class="t" style="left:1858.80px;top:1489.60px;font-size:28px;font-family:'Liberation Sans', sans-serif;letter-spacing:0.177px;color:#80708F;">May 29, 2024 2:21:03 PM UTC</div>
<div class="a" style="left:2333.5px;top:1478.5px;width:58.80000000000018px;height:50.90000000000009px;border:2px solid #E0DCE5;border-radius:8px;background:#fff;"></div>
<svg style="left:2350px;top:1492px;color:#2B2233" width="24" height="24" viewBox="0 0 24 24"><use href="#prof"/></svg>
<div class="a" style="left:255px;top:1632px;width:2210px;height:2px;background:#F0ECF3;"></div>
<div class="t" style="left:295.00px;top:1575.60px;font-size:28px;font-family:'Liberation Sans', sans-serif;letter-spacing:-0.243px;color:#3A6BD0;">b6a911d6</div>
<svg style="left:460px;top:1574px" width="32" height="32"><use href="#py"/></svg>
<div class="t" style="left:502.10px;top:1575.60px;font-size:28px;font-family:'Liberation Sans', sans-serif;letter-spacing:0.596px;color:#2B2233;">GroupEventDetailsEndpoint.get</div>
<div class="t" style="left:980.40px;top:1575.60px;font-size:28px;font-family:'Liberation Sans', sans-serif;letter-spacing:0.615px;color:#2B2233;">base.dispatch.execute</div>
<div class="t" style="left:1678.70px;top:1575.60px;font-size:28px;font-family:'Liberation Sans', sans-serif;letter-spacing:1.150px;color:#2B2233;">85.35ms</div>
<div class="t" style="left:1858.80px;top:1575.60px;font-size:28px;font-family:'Liberation Sans', sans-serif;letter-spacing:0.177px;color:#80708F;">May 27, 2024 9:45:45 PM UTC</div>
<div class="a" style="left:2333.5px;top:1564.5px;width:58.80000000000018px;height:50.90000000000009px;border:2px solid #E0DCE5;border-radius:8px;background:#fff;"></div>
<svg style="left:2350px;top:1578px;color:#A396B0" width="24" height="24" viewBox="0 0 24 24"><use href="#prof"/></svg>
<div class="a" style="left:255px;top:1718px;width:2210px;height:2px;background:#F0ECF3;"></div>
<div class="t" style="left:295.00px;top:1661.60px;font-size:28px;font-family:'Liberation Sans', sans-serif;letter-spacing:1.543px;color:#3A6BD0;">b2ef3faf</div>
<svg style="left:460px;top:1660px" width="32" height="32"><use href="#py"/></svg>
<div class="t" style="left:502.10px;top:1661.60px;font-size:28px;font-family:'Liberation Sans', sans-serif;letter-spacing:0.596px;color:#2B2233;">GroupEventDetailsEndpoint.get</div>
<div class="t" style="left:980.40px;top:1661.60px;font-size:28px;font-family:'Liberation Sans', sans-serif;letter-spacing:0.615px;color:#2B2233;">base.dispatch.execute</div>
<div class="t" style="left:1678.70px;top:1661.60px;font-size:28px;font-family:'Liberation Sans', sans-serif;letter-spacing:1.150px;color:#2B2233;">152.6ms</div>
<div class="t" style="left:1858.80px;top:1661.60px;font-size:28px;font-family:'Liberation Sans', sans-serif;letter-spacing:0.430px;color:#80708F;">May 28, 2024 10:45:11 AM UTC</div>
<div class="a" style="left:2333.5px;top:1650.5px;width:58.80000000000018px;height:50.90000000000009px;border:2px solid #E0DCE5;border-radius:8px;background:#fff;"></div>
<svg style="left:2350px;top:1664px;color:#A396B0" width="24" height="24" viewBox="0 0 24 24"><use href="#prof"/></svg>
<div class="a" style="left:255px;top:1804px;width:2210px;height:2px;background:#F0ECF3;"></div>
<div class="t" style="left:295.00px;top:1747.60px;font-size:28px;font-family:'Liberation Sans', sans-serif;letter-spacing:0.114px;color:#3A6BD0;">9974a41f</div>
<svg style="left:460px;top:1746px" width="32" height="32"><use href="#py"/></svg>
<div class="t" style="left:502.10px;top:1747.60px;font-size:28px;font-family:'Liberation Sans', sans-serif;letter-spacing:0.596px;color:#2B2233;">GroupEventDetailsEndpoint.get</div>
<div class="t" style="left:980.40px;top:1747.60px;font-size:28px;font-family:'Liberation Sans', sans-serif;letter-spacing:0.615px;color:#2B2233;">base.dispatch.execute</div>
<div class="t" style="left:1662.00px;top:1747.60px;font-size:28px;font-family:'Liberation Sans', sans-serif;letter-spacing:1.086px;color:#2B2233;">130.73ms</div>
<div class="t" style="left:1858.80px;top:1747.60px;font-size:28px;font-family:'Liberation Sans', sans-serif;letter-spacing:0.185px;color:#80708F;">May 22, 2024 8:17:41 PM UTC</div>
<div class="a" style="left:2333.5px;top:1736.5px;width:58.80000000000018px;height:50.90000000000009px;border:2px solid #E0DCE5;border-radius:8px;background:#fff;"></div>
<svg style="left:2350px;top:1750px;color:#A396B0" width="24" height="24" viewBox="0 0 24 24"><use href="#prof"/></svg>
<div class="a" style="left:255px;top:1890px;width:2210px;height:2px;background:#F0ECF3;"></div>
<div class="t" style="left:295.00px;top:1833.60px;font-size:28px;font-family:'Liberation Sans', sans-serif;letter-spacing:1.214px;color:#3A6BD0;">8d3c892e</div>
<svg style="left:460px;top:1832px" width="32" height="32"><use href="#py"/></svg>
<div class="t" style="left:502.10px;top:1833.60px;font-size:28px;font-family:'Liberation Sans', sans-serif;letter-spacing:0.596px;color:#2B2233;">GroupEventDetailsEndpoint.get</div>
<div class="t" style="left:980.40px;top:1833.60px;font-size:28px;font-family:'Liberation Sans', sans-serif;letter-spacing:0.615px;color:#2B2233;">base.dispatch.execute</div>
<div class="t" style="left:1662.00px;top:1833.60px;font-size:28px;font-family:'Liberation Sans', sans-serif;letter-spacing:1.371px;color:#2B2233;">114.02ms</div>
<div class="t" style="left:1858.80px;top:1833.60px;font-size:28px;font-family:'Liberation Sans', sans-serif;letter-spacing:0.223px;color:#80708F;">May 28, 2024 4:22:51 AM UTC</div>
<div class="a" style="left:2333.5px;top:1822.5px;width:58.80000000000018px;height:50.90000000000009px;border:2px solid #E0DCE5;border-radius:8px;background:#fff;"></div>
<svg style="left:2350px;top:1836px;color:#A396B0" width="24" height="24" viewBox="0 0 24 24"><use href="#prof"/></svg>
<div class="a" style="left:255px;top:1976px;width:2210px;height:2px;background:#F0ECF3;"></div>
<div class="t" style="left:295.00px;top:1919.60px;font-size:28px;font-family:'Liberation Sans', sans-serif;letter-spacing:0.829px;color:#3A6BD0;">9dbc86a7</div>
<svg style="left:460px;top:1918px" width="32" height="32"><use href="#py"/></svg>
<div class="t" style="left:502.10px;top:1919.60px;font-size:28px;font-family:'Liberation Sans', sans-serif;letter-spacing:0.596px;color:#2B2233;">GroupEventDetailsEndpoint.get</div>
<div class="t" style="left:980.40px;top:1919.60px;font-size:28px;font-family:'Liberation Sans', sans-serif;letter-spacing:0.615px;color:#2B2233;">base.dispatch.execute</div>
<div class="t" style="left:1662.00px;top:1919.60px;font-size:28px;font-family:'Liberation Sans', sans-serif;letter-spacing:1.086px;color:#2B2233;">130.06ms</div>
<div class="t" style="left:1858.80px;top:1919.60px;font-size:28px;font-family:'Liberation Sans', sans-serif;letter-spacing:0.185px;color:#80708F;">May 29, 2024 2:15:40 PM UTC</div>
<div class="a" style="left:2333.5px;top:1908.5px;width:58.80000000000018px;height:50.90000000000009px;border:2px solid #E0DCE5;border-radius:8px;background:#fff;"></div>
<svg style="left:2350px;top:1922px;color:#A396B0" width="24" height="24" viewBox="0 0 24 24"><use href="#prof"/></svg>
<div class="a" style="left:255px;top:2062px;width:2210px;height:2px;background:#F0ECF3;"></div>
<div class="t" style="left:295.00px;top:2005.60px;font-size:28px;font-family:'Liberation Sans', sans-serif;letter-spacing:0.471px;color:#3A6BD0;">8a75c7fe</div>
<svg style="left:460px;top:2004px" width="32" height="32"><use href="#py"/></svg>
<div class="t" style="left:502.10px;top:2005.60px;font-size:28px;font-family:'Liberation Sans', sans-serif;letter-spacing:0.596px;color:#2B2233;">GroupEventDetailsEndpoint.get</div>
<div class="t" style="left:980.40px;top:2005.60px;font-size:28px;font-family:'Liberation Sans', sans-serif;letter-spacing:0.615px;color:#2B2233;">base.dispatch.execute</div>
<div class="t" style="left:1662.00px;top:2005.60px;font-size:28px;font-family:'Liberation Sans', sans-serif;letter-spacing:1.086px;color:#2B2233;">193.06ms</div>
<div class="t" style="left:1858.80px;top:2005.60px;font-size:28px;font-family:'Liberation Sans', sans-serif;letter-spacing:0.185px;color:#80708F;">May 22, 2024 8:06:54 PM UTC</div>
<div class="a" style="left:2333.5px;top:1994.5px;width:58.80000000000018px;height:50.90000000000009px;border:2px solid #E0DCE5;border-radius:8px;background:#fff;"></div>
<svg style="left:2350px;top:2008px;color:#A396B0" width="24" height="24" viewBox="0 0 24 24"><use href="#prof"/></svg>
<div class="a" style="left:255px;top:2148px;width:2210px;height:2px;background:#F0ECF3;"></div>
<div class="t" style="left:295.00px;top:2091.60px;font-size:28px;font-family:'Liberation Sans', sans-serif;letter-spacing:1.143px;color:#3A6BD0;">8b8f8e7a</div>
<svg style="left:460px;top:2090px" width="32" height="32"><use href="#py"/></svg>
<div class="t" style="left:502.10px;top:2091.60px;font-size:28px;font-family:'Liberation Sans', sans-serif;letter-spacing:0.596px;color:#2B2233;">GroupEventDetailsEndpoint.get</div>
<div class="t" style="left:980.40px;top:2091.60px;font-size:28px;font-family:'Liberation Sans', sans-serif;letter-spacing:0.615px;color:#2B2233;">base.dispatch.execute</div>
<div class="t" style="left:1662.00px;top:2091.60px;font-size:28px;font-family:'Liberation Sans', sans-serif;letter-spacing:1.086px;color:#2B2233;">160.12ms</div>
<div class="t" style="left:1858.80px;top:2091.60px;font-size:28px;font-family:'Liberation Sans', sans-serif;letter-spacing:0.185px;color:#80708F;">May 25, 2024 1:12:33 PM UTC</div>
<div class="a" style="left:2333.5px;top:2080.5px;width:58.80000000000018px;height:50.90000000000009px;border:2px solid #E0DCE5;border-radius:8px;background:#fff;"></div>
<svg style="left:2350px;top:2094px;color:#A396B0" width="24" height="24" viewBox="0 0 24 24"><use href="#prof"/></svg>
</body></html>
